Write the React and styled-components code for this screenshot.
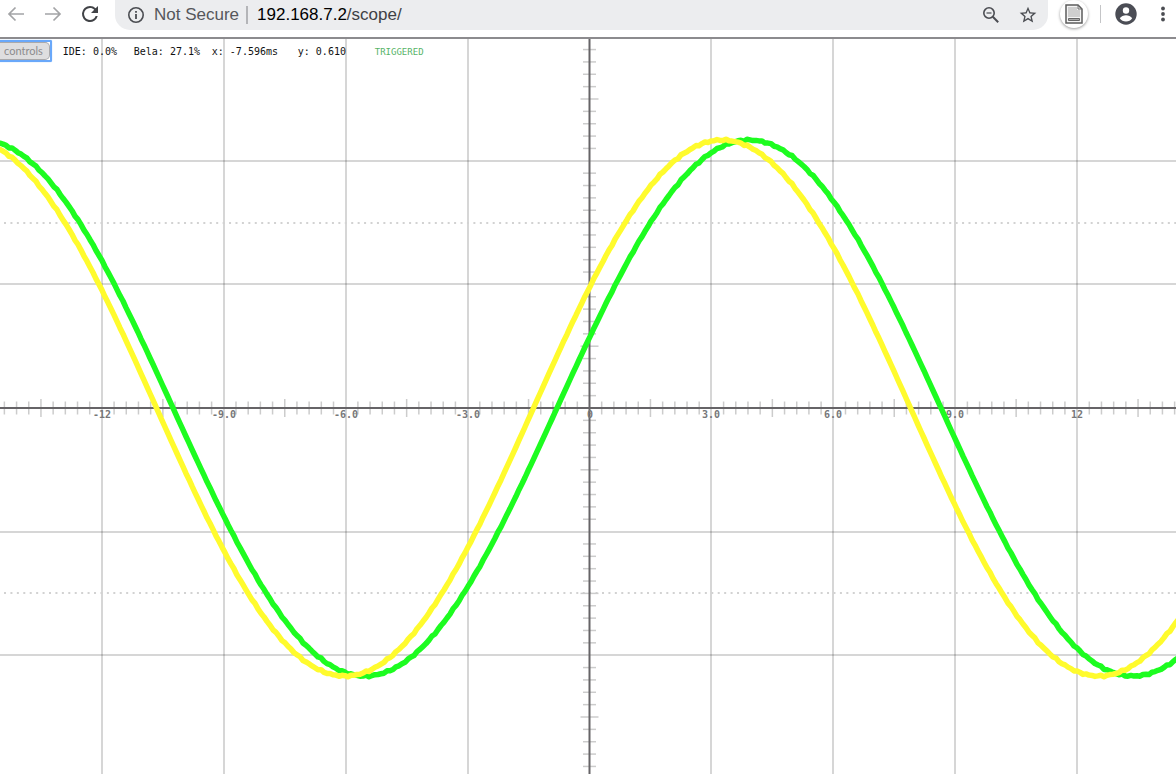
import styled, { createGlobalStyle } from "styled-components";

const GlobalStyle = createGlobalStyle`
  * {
    box-sizing: border-box;
  }

  html,
  body,
  #root {
    height: 100%;
  }

  body {
    margin: 0;
    overflow: hidden;
    background-color: #fff;
    font-family: "Liberation Sans", Arial, sans-serif;
  }
`;

const Page = styled.div`
  height: 100%;
  display: flex;
  flex-direction: column;
`;

const Toolbar = styled.header`
  height: 39px;
  flex: none;
  display: flex;
  align-items: flex-start;
  padding: 0 3px 0 4px;
  border-bottom: 2px solid #8c8b8e;
  background-color: #fff;
`;

const NavButton = styled.button`
  width: 24px;
  height: 28px;
  margin-right: 13px;
  padding: 0;
  display: flex;
  flex: none;
  align-items: center;
  justify-content: center;
  border: 0;
  background: none;
  color: ${({ $active }) => ($active ? "#414347" : "#a3a4a6")};
`;

const AddressBar = styled.div`
  height: 30px;
  min-width: 0;
  flex: 1;
  display: flex;
  align-items: center;
  padding: 0 10px 0 12px;
  border-radius: 0 0 15px 15px;
  background-color: #ecedef;
`;

const Security = styled.span`
  display: flex;
  flex: none;
  align-items: center;
  gap: 9px;
  padding-right: 7px;
  border-right: 2px solid #b4b5b8;
  font-size: 17px;
  line-height: 18px;
  color: #55575b;
`;

const Url = styled.a`
  flex: 1;
  padding-left: 9px;
  font-size: 17px;
  line-height: 18px;
  text-decoration: none;
  color: #404145;

  b {
    font-weight: 400;
    color: #000;
  }
`;

const BarButton = styled.button`
  width: 20px;
  height: 20px;
  margin-left: ${({ $gap }) => $gap || 0}px;
  padding: 0;
  display: flex;
  flex: none;
  align-items: center;
  justify-content: center;
  border: 0;
  background: none;
  color: #4b4d52;
`;

const Extras = styled.div`
  height: 28px;
  flex: none;
  display: flex;
  align-items: center;
  padding-left: 12px;
`;

const ExtensionButton = styled.button`
  width: 28px;
  height: 28px;
  padding: 0;
  display: flex;
  align-items: center;
  justify-content: center;
  border: 0;
  border-radius: 50%;
  background-color: #fff;
  box-shadow: 0 1px 3px rgba(0, 0, 0, 0.4);
`;

const Separator = styled.span`
  width: 1px;
  height: 18px;
  margin: 0 15px 0 12px;
  background-color: #c4c5c7;
`;

const Scope = styled.main`
  position: relative;
  min-height: 0;
  flex: 1;
  overflow: hidden;
`;

const Plot = styled.svg`
  width: 100%;
  height: 100%;
  display: block;
`;

const Label = styled.text`
  font-family: "DejaVu Sans Mono", monospace;
  font-size: 10px;
  font-weight: 700;
  text-anchor: middle;
  fill: #777779;
`;

const Status = styled.div`
  position: absolute;
  top: 1px;
  left: 0;
  display: flex;
  align-items: flex-start;
  font-family: "DejaVu Sans Mono", monospace;
  font-size: 10px;
  line-height: 24px;
  white-space: pre;
  color: #111;
`;

const ControlsButton = styled.button`
  height: 22px;
  margin-right: 11px;
  padding: 0;
  display: flex;
  border: 2px solid #69a8fa;
  border-left: 0;
  border-radius: 0 2px 2px 0;
  background-color: #fff;
  box-shadow: 0 0 1px #69a8fa;
  color: #8c8c8e;

  span {
    padding: 0 6px 0 4px;
    border: 1px solid #a9a9ab;
    border-left: 0;
    border-radius: 0 5px 5px 0;
    background-color: #dededf;
    font-family: Lato, sans-serif;
    font-size: 11px;
    line-height: 16px;
  }
`;

const Reading = styled.span`
  width: ${({ $width }) => $width}px;
`;

const Trigger = styled.span`
  font-size: 9px;
  color: #58b468;
`;

const ORIGIN = { x: 589.5, y: 369 };
const UNIT = { x: 121.9, y: 123.6 };

const TIME_LABELS = [
  [-4, "-12"],
  [-3, "-9.0"],
  [-2, "-6.0"],
  [-1, "-3.0"],
  [0, "0"],
  [1, "3.0"],
  [2, "6.0"],
  [3, "9.0"],
  [4, "12"],
];

const range = (from, to) =>
  Array.from({ length: to - from + 1 }, (_, i) => from + i);

// small deterministic noise, like the analog input of the board
const noise = (i) => Math.sin(i * 12.9898) * Math.cos(i * 4.1414);

const wave = (peak, period) =>
  range(-1, 1000)
    .map((i) => {
      const x = i * 3;
      const level = Math.cos(((x - peak) / period) * Math.PI * 2);
      const y = ORIGIN.y - 268 * level + noise(i) * Math.abs(level);
      return `${x},${y.toFixed(1)}`;
    })
    .join(" ");

const Grid = () => (
  <g>
    <g stroke="#000" strokeOpacity="0.16" strokeWidth="2">
      {range(-4, 12).map((n) => {
        const x = Math.round(ORIGIN.x + n * UNIT.x);
        return n !== 0 && <line key={n} x1={x} x2={x} y1="0" y2="100%" />;
      })}
      {range(-2, 12).map((n) => {
        const y = Math.round(ORIGIN.y + n * UNIT.y);
        return n !== 0 && <line key={n} x1="0" x2="100%" y1={y} y2={y} />;
      })}
    </g>
    <g stroke="#d2d2d2" strokeWidth="2" strokeDasharray="2 4.43">
      {[-1.5, 1.5].map((n) => {
        const y = Math.round(ORIGIN.y + n * UNIT.y);
        return <line key={n} x1="4" x2="100%" y1={y} y2={y} />;
      })}
    </g>
    <g stroke="#ccc" strokeWidth="1.5">
      {range(-48, 120).map((n) => {
        const x = ORIGIN.x + (n * UNIT.x) / 10;
        const size = n % 5 === 0 ? 9 : 6.5;
        return (
          n % 10 !== 0 && (
            <line
              key={n}
              x1={x}
              x2={x}
              y1={ORIGIN.y - size}
              y2={ORIGIN.y + size}
            />
          )
        );
      })}
      {range(-29, 120).map((n) => {
        const y = ORIGIN.y + (n * UNIT.y) / 10;
        const size = n % 5 === 0 ? 9 : 6.5;
        return (
          n % 10 !== 0 && (
            <line
              key={n}
              x1={ORIGIN.x - size}
              x2={ORIGIN.x + size}
              y1={y}
              y2={y}
            />
          )
        );
      })}
    </g>
    <g stroke="#666467" strokeWidth="2">
      <line x1="0" x2="100%" y1={ORIGIN.y} y2={ORIGIN.y} />
      <line x1={ORIGIN.x} x2={ORIGIN.x} y1="0" y2="100%" />
    </g>
    {TIME_LABELS.map(([n, text]) => (
      <Label key={n} x={Math.round(ORIGIN.x + n * UNIT.x)} y={ORIGIN.y + 10}>
        {text}
      </Label>
    ))}
  </g>
);

const Arrow = ({ flip }) => (
  <svg width="18" height="16" viewBox="0 0 18 16" fill="none">
    <path
      d={flip ? "M1 8h15M9.5 1.5 16 8l-6.5 6.5" : "M17 8H2M8.5 1.5 2 8l6.5 6.5"}
      stroke="currentColor"
      strokeWidth="1.7"
    />
  </svg>
);

const App = () => {
  return (
    <Page>
      <GlobalStyle />
      <Toolbar>
        <NavButton aria-label="Back">
          <Arrow />
        </NavButton>
        <NavButton aria-label="Forward">
          <Arrow flip />
        </NavButton>
        <NavButton aria-label="Reload" $active>
          <svg width="24" height="24" viewBox="0 0 24 24" fill="currentColor">
            <path d="M17.65 6.35A7.96 7.96 0 0 0 12 4a8 8 0 1 0 7.73 10h-2.08A6 6 0 1 1 12 6c1.66 0 3.14.69 4.22 1.78L13 11h7V4z" />
          </svg>
        </NavButton>
        <AddressBar>
          <Security>
            <svg width="18" height="18" viewBox="0 0 18 18" fill="none">
              <circle cx="9" cy="9" r="7.2" stroke="#4b4d52" strokeWidth="1.6" />
              <path d="M9 8v5M9 5v1.8" stroke="#4b4d52" strokeWidth="1.8" />
            </svg>
            Not Secure
          </Security>
          <Url href="http://192.168.7.2/scope/">
            <b>192.168.7.2</b>/scope/
          </Url>
          <BarButton aria-label="Zoom">
            <svg width="18" height="18" viewBox="0 0 18 18" fill="none">
              <g stroke="currentColor" strokeWidth="1.6">
                <circle cx="7" cy="7" r="5.2" />
                <path d="M4.5 7h5" strokeWidth="1.2" />
                <path d="m10.8 10.8 5.4 5.4" strokeWidth="2" />
              </g>
            </svg>
          </BarButton>
          <BarButton aria-label="Bookmark" $gap={17}>
            <svg width="20" height="20" viewBox="0 0 24 24" fill="currentColor">
              <path d="m22 9.24-7.19-.62L12 2 9.19 8.63 2 9.24l5.46 4.73L5.82 21 12 17.27 18.18 21l-1.63-7.03zM12 15.4l-3.76 2.27 1-4.28-3.32-2.88 4.38-.38L12 6.1l1.71 4.04 4.38.38-3.32 2.88 1 4.28z" />
            </svg>
          </BarButton>
        </AddressBar>
        <Extras>
          <ExtensionButton aria-label="Extension">
            <svg width="18" height="20" viewBox="0 0 18 20">
              <path
                d="M1 1h12l4 4v14H1z"
                fill="#f4f4f4"
                stroke="#5c5c5c"
                strokeWidth="1.5"
              />
              <path d="M3 3h9v3h3v7H3z" fill="#cfcfcf" />
              <path d="M13 1v4h4" fill="none" stroke="#6b6b6b" />
              <path d="M3.5 14.5h11v2h-11z" fill="#a8a8a8" stroke="#666" />
            </svg>
          </ExtensionButton>
          <Separator />
          <BarButton aria-label="Profile">
            <svg width="22" height="22" viewBox="0 0 22 22" overflow="visible">
              <circle cx="11" cy="11" r="10.7" fill="#4b4d55" />
              <circle cx="11" cy="7.5" r="3.2" fill="#fff" />
              <path
                d="M4.8 15.2c1.3-2 3.9-3 6.2-3s4.9 1 6.2 3A7.5 7.5 0 0 1 11 18.5a7.5 7.5 0 0 1-6.2-3.3z"
                fill="#fff"
              />
            </svg>
          </BarButton>
          <BarButton aria-label="Menu" $gap={17}>
            <svg width="6" height="18" viewBox="0 0 6 18" fill="currentColor">
              <circle cx="3" cy="3.5" r="1.9" />
              <circle cx="3" cy="9" r="1.9" />
              <circle cx="3" cy="14.5" r="1.9" />
            </svg>
          </BarButton>
        </Extras>
      </Toolbar>
      <Scope>
        <Plot>
          <Grid />
          <g fill="none" strokeWidth="5.5" strokeLinejoin="round">
            <polyline points={wave(749, 768)} stroke="#1dfc20" />
            <polyline points={wave(722, 754)} stroke="#fffb2d" />
          </g>
        </Plot>
        <Status>
          <ControlsButton>
            <span>controls</span>
          </ControlsButton>
          <Reading $width={71}>IDE: 0.0%</Reading>
          <Reading $width={78}>Bela: 27.1%</Reading>
          <Reading $width={86}>x: -7.596ms</Reading>
          <Reading $width={77}>y: 0.610</Reading>
          <Trigger>TRIGGERED</Trigger>
        </Status>
      </Scope>
    </Page>
  );
};

export default App;
